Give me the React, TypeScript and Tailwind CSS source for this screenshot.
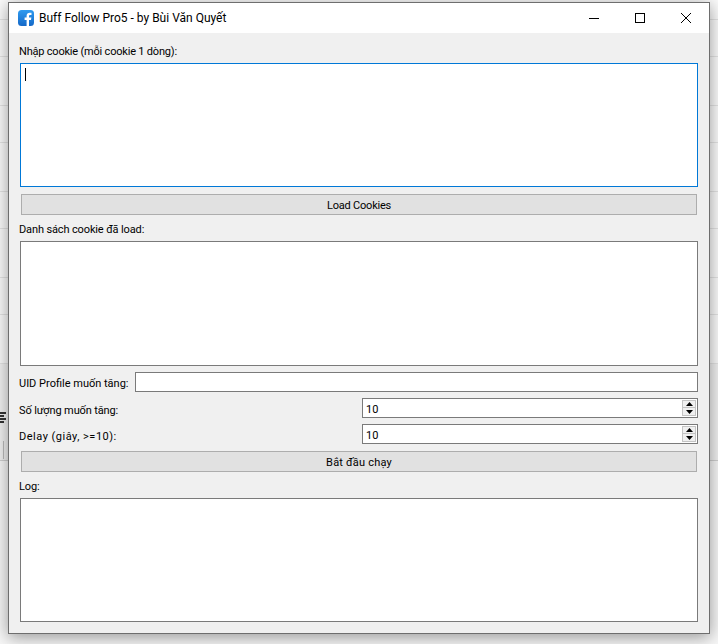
import React from "react";

const Label = ({ children, className = "" }: { children: React.ReactNode; className?: string }) => (
  <div className={`h-[18px] leading-[20px] text-[11px] tracking-[-0.13px] text-black whitespace-nowrap shrink-0 ${className}`}>{children}</div>
);

const Btn = ({ children, className = "" }: { children: React.ReactNode; className?: string }) => (
  <div className={`ml-[2px] w-[676px] h-[21px] pt-[3px] flex items-center justify-center bg-[#e1e1e1] border border-[#adadad] text-[11px] tracking-[-0.2px] text-black ${className}`}>{children}</div>
);

const Spin = ({ label, className = "" }: { label: React.ReactNode; className?: string }) => (
  <div className={`flex items-center justify-between h-[20px] ${className}`}>
    <Label className="mt-[3px]">{label}</Label>
    <div className="w-[336px] h-[20px] flex items-center justify-between bg-white border border-[#7a7a7a] pl-[3px] pr-px text-[11px] text-black">
      <span className="mt-[4px]">10</span>
      <div className="flex flex-col w-[14px] h-[16px]">
        <div className="h-[8px] flex items-center justify-center bg-[#f0f0f0] border border-[#c4c4c4]">
          <svg width="7" height="4" viewBox="0 0 7 4"><path d="M3.5 0 L7 4 L0 4 Z" fill="#000" /></svg>
        </div>
        <div className="h-[8px] flex items-center justify-center bg-[#f0f0f0] border border-[#c4c4c4] border-t-0">
          <svg width="7" height="4" viewBox="0 0 7 4"><path d="M0 0 L7 0 L3.5 4 Z" fill="#000" /></svg>
        </div>
      </div>
    </div>
  </div>
);

const bgRows = ["h-[20px]", "h-[37px]", "h-[49px]", "h-[37px]", "h-[49px]", "h-[37px]", "h-[49px]", "h-[37px]", "h-[49px]"];

export default function App() {
  return (
    <div className="relative w-[718px] h-[644px] overflow-hidden bg-white" style={{ fontFamily: 'Roboto, "Noto Sans", sans-serif' }}>
      {/* page behind the window */}
      <div className="flex flex-col">
        {bgRows.map((h, i) => (
          <div key={i} className={`${h} border-b border-[#e4e4e4] bg-[#fbfbfb]`}>
            {i === 0 && <div className="pl-[310px] mt-[-21px] text-[17px] leading-[24px] text-[#555]">Danh mục</div>}
          </div>
        ))}
        <div className="h-[97px] bg-[#f1f1f1] border-b border-[#d0d0d0]">
          <div className="flex flex-col gap-[1px] mt-[48px]">
            <div className="w-[6px] h-[2px] bg-[#333]" />
            <div className="w-[4px] h-[2px] bg-[#333]" />
            <div className="w-[6px] h-[2px] bg-[#333]" />
            <div className="w-[4px] h-[2px] bg-[#333]" />
          </div>
          <div className="ml-[3px] mt-[18px] w-px h-[18px] bg-[#bbb]" />
        </div>
        <div className="h-[183px] bg-[#f7f7f7]" />
      </div>

      {/* window */}
      <div className="absolute left-[8px] top-[2px] w-[702px] h-[632px] border border-[#6e6e6e] bg-[#f0f0f0] shadow-[0_3px_16px_rgba(0,0,0,0.4)] flex flex-col">
        <div className="h-[30px] shrink-0 bg-white flex items-center justify-between">
          <div className="flex items-center pl-[9px]">
            <svg width="16" height="16" viewBox="0 0 16 16">
              <defs>
                <linearGradient id="fb" x1="0" y1="0" x2="0" y2="1">
                  <stop offset="0" stopColor="#2f9bf0" />
                  <stop offset="1" stopColor="#1468c8" />
                </linearGradient>
              </defs>
              <rect x="0" y="0" width="16" height="16" rx="3.5" fill="url(#fb)" />
              <path d="M11 16 V10 H13 L13.4 7.6 H11 V6.2 C11 5.4 11.3 4.9 12.3 4.9 H13.5 V2.8 C13.2 2.8 12.5 2.7 11.7 2.7 C9.9 2.7 8.6 3.8 8.6 5.9 V7.6 H6.6 V10 H8.6 V16 Z" fill="#fff" />
            </svg>
            <span className="ml-[5px] text-[12px] text-black whitespace-nowrap">Buff Follow Pro5 - by Bùi Văn Quyết</span>
          </div>
          <div className="flex h-[30px]">
            <div className="w-[46px] flex items-center justify-center">
              <svg width="10" height="10" viewBox="0 0 10 10"><path d="M0 5.5 H10" stroke="#000" strokeWidth="1" /></svg>
            </div>
            <div className="w-[46px] flex items-center justify-center">
              <svg width="10" height="10" viewBox="0 0 10 10"><rect x="0.5" y="0.5" width="9" height="9" fill="none" stroke="#000" strokeWidth="1" /></svg>
            </div>
            <div className="w-[46px] flex items-center justify-center">
              <svg width="10" height="10" viewBox="0 0 10 10"><path d="M0 0 L10 10 M10 0 L0 10" stroke="#000" strokeWidth="1" /></svg>
            </div>
          </div>
        </div>

        <div className="flex-1 flex flex-col pt-[9px] pl-[10px] pr-[11px]">
          <Label><span className="tracking-[-0.2px]">Nhập cookie (mỗi cookie 1 dòng):</span></Label>
          <div className="mt-[3px] ml-px h-[124px] bg-white border border-[#0078d7] pl-[4px] pt-[4px]">
            <div className="w-px h-[13px] bg-black" />
          </div>
          <Btn className="mt-[7px]">Load Cookies</Btn>
          <Label className="mt-[5px]">Danh sách cookie đã load:</Label>
          <div className="mt-[3px] ml-px h-[125px] bg-white border border-[#7a7a7a]" />
          <div className="mt-[6px] flex items-center justify-between h-[20px]">
            <Label className="mt-[1px]"><span className="tracking-[0px]">UID Profile muốn tăng:</span></Label>
            <div className="w-[563px] h-[20px] bg-white border border-[#7a7a7a]" />
          </div>
          <Spin label="Số lượng muốn tăng:" className="mt-[6px]" />
          <Spin label={<span className="tracking-[0.5px]">Delay (giây, &gt;=10):</span>} className="mt-[6px]" />
          <Btn className="mt-[7px]"><span className="tracking-[0.2px]">Bắt đầu chạy</span></Btn>
          <Label className="mt-[5px]">Log:</Label>
          <div className="mt-[3px] ml-px h-[124px] bg-white border border-[#7a7a7a]" />
        </div>
      </div>
    </div>
  );
}
